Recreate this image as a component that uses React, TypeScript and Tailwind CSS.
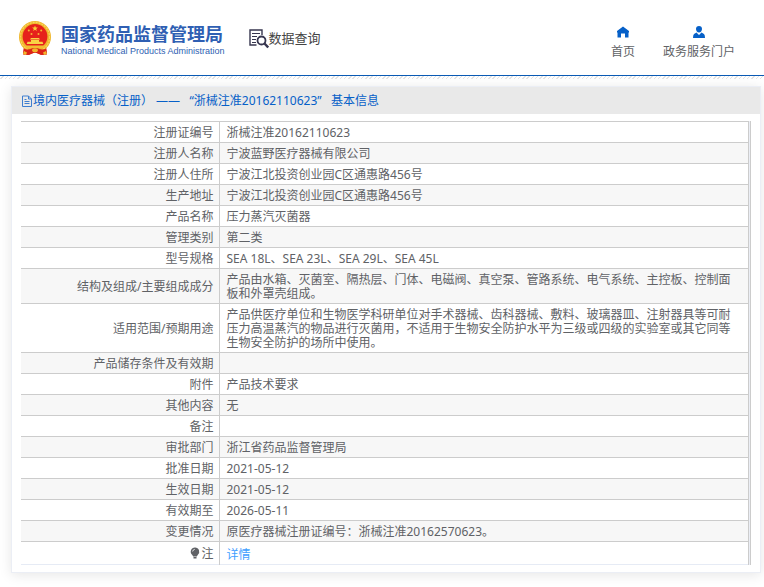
const rows: { label: string; value: string }[] = [
  { label: '注册证编号', value: '浙械注准20162110623' },
  { label: '注册人名称', value: '宁波蓝野医疗器械有限公司' },
  { label: '注册人住所', value: '宁波江北投资创业园C区通惠路456号' },
  { label: '生产地址', value: '宁波江北投资创业园C区通惠路456号' },
  { label: '产品名称', value: '压力蒸汽灭菌器' },
  { label: '管理类别', value: '第二类' },
  { label: '型号规格', value: 'SEA 18L、SEA 23L、SEA 29L、SEA 45L' },
  {
    label: '结构及组成/主要组成成分',
    value: '产品由水箱、灭菌室、隔热层、门体、电磁阀、真空泵、管路系统、电气系统、主控板、控制面板和外罩壳组成。',
  },
  {
    label: '适用范围/预期用途',
    value:
      '产品供医疗单位和生物医学科研单位对手术器械、齿科器械、敷料、玻璃器皿、注射器具等可耐压力高温蒸汽的物品进行灭菌用，不适用于生物安全防护水平为三级或四级的实验室或其它同等生物安全防护的场所中使用。',
  },
  { label: '产品储存条件及有效期', value: '' },
  { label: '附件', value: '产品技术要求' },
  { label: '其他内容', value: '无' },
  { label: '备注', value: '' },
  { label: '审批部门', value: '浙江省药品监督管理局' },
  { label: '批准日期', value: '2021-05-12' },
  { label: '生效日期', value: '2021-05-12' },
  { label: '有效期至', value: '2026-05-11' },
  { label: '变更情况', value: '原医疗器械注册证编号：浙械注准20162570623。' },
]

function Emblem() {
  return (
    <svg className="h-[35px] w-8 shrink-0" viewBox="0 0 32 35" aria-hidden="true">
      <path d="M5 25 L27 25 L28 33 L22 34 L16 31 L10 34 L4 33Z" fill="#dc2318" />
      <circle cx="16" cy="16" r="16" fill="#efb52c" />
      <circle cx="16" cy="16" r="14.6" fill="none" stroke="#f9d65a" strokeWidth="1.2" strokeDasharray="2 1" />
      <circle cx="16" cy="15.5" r="12.4" fill="#e6211b" />
      <path d="M16 4.6l.8 2h2.1l-1.7 1.3.7 2.1-1.9-1.3-1.9 1.3.7-2.1-1.7-1.3h2.1z" fill="#f9cf3a" />
      <g fill="#f4b834">
        <circle cx="9.8" cy="9.5" r="1" />
        <circle cx="22.2" cy="9.5" r="1" />
        <circle cx="12.5" cy="13" r="1" />
        <circle cx="19.5" cy="13" r="1" />
      </g>
      <path d="M11 18.500l1-1.500h8l1 1.500zM12 19h8v1.800h3.500l.8 2.200H7.700l.8-2.200H12z" fill="#f9d245" />
      <path d="M5.500 24.500h21l-2 2.500h-17z" fill="#f2bd32" />
      <path d="M5 27.500c3 2 7 0 11 0s8 2 11 0l1 6-5 .5-7-2.500L9 34l-5-.5z" fill="#dc2318" />
      <path d="M13 29.500a3 2.200 0 0 1 6 0l-1 1.500h-4zM5 30l3 1.500-1 2.500-3-1zM27 30l-3 1.500 1 2.500 3-1z" fill="#f2b52d" />
    </svg>
  )
}

function SearchDocIcon() {
  return (
    <svg className="h-5 w-5 shrink-0" viewBox="0 0 20 20" fill="none" stroke="#37364f" aria-hidden="true">
      <path d="M7.500 16H1V1h12v5" strokeWidth="1.4" />
      <path d="M3 4.500h8M3 7.500h5M3 10.500h4M3 13.500h4" strokeWidth="1.2" />
      <circle cx="12.5" cy="11.5" r="4" strokeWidth="1.8" />
      <path d="M15.500 14.500l3.700 4" strokeWidth="2.4" />
    </svg>
  )
}

function HomeIcon() {
  return (
    <svg className="h-3 w-3" viewBox="0 0 12 12" fill="#0660c8" aria-hidden="true">
      <path d="M6 0.500l6 4.500v1.500h-.5v5H8V7.500H4v4H.5v-5H0V5z" />
    </svg>
  )
}

function UserIcon() {
  return (
    <svg className="h-3 w-3" viewBox="0 0 12 12" fill="#0660c8" aria-hidden="true">
      <path d="M6 0a3 3 0 0 1 3 3c0 1.700-1.300 3.500-3 3.500S3 4.700 3 3a3 3 0 0 1 3-3zM3.500 6.500L6 9l2.500-2.500 2.500 1.500q1 .8 1 4H0q0-3.200 1-4z" />
    </svg>
  )
}

function DocIcon() {
  return (
    <svg className="h-3 w-3 shrink-0" viewBox="0 0 12 12" fill="none" stroke="#3f7fd0" aria-hidden="true">
      <path d="M1.500 1h6l3 3v7.500h-9zM7.500 1v3h3M3.500 6.500h5M3.500 8.500h5M3.500 4.500h2" />
    </svg>
  )
}

function BulbIcon() {
  return (
    <svg className="h-3 w-3" viewBox="0 0 12 12" aria-hidden="true">
      <path d="M6 0.500a4.300 4.300 0 0 1 2.700 7.600L7.800 9.500H4.200L3.300 8.100A4.300 4.300 0 0 1 6 0.500zM4.500 10h3v1.500h-3z" fill="#606266" />
      <path d="M3.600 4.500A2.600 2.600 0 0 1 5.800 2.300" fill="none" stroke="#fff" strokeWidth=".8" />
    </svg>
  )
}

export default function App() {
  return (
    <div className="bg-white pb-[14px] font-['Noto_Sans','Noto_Sans_CJK_SC',sans-serif] text-xs text-[#606266]">
      <header className="flex h-[76px] items-center justify-between border-b border-[#0a5ab4] pr-[29px] pl-[19px]">
        <div className="flex items-center pt-[2px]">
          <Emblem />
          <div className="ml-[10px] text-[#2f5fb3]">
            <h1 className="pt-[2px] font-['Noto_Sans_CJK_SC',sans-serif] text-lg leading-5 font-bold whitespace-nowrap">
              国家药品监督管理局
            </h1>
            <p className="pt-[2px] font-['Liberation_Sans',sans-serif] text-[9px] leading-3 whitespace-nowrap">
              National Medical Products Administration
            </p>
          </div>
          <div className="ml-6 flex items-center">
            <SearchDocIcon />
            <span className="text-[13px] whitespace-nowrap text-[#444]">数据查询</span>
          </div>
        </div>
        <nav className="flex gap-7 pt-[10px]">
          <a href="#" className="flex flex-col items-center gap-[6px]">
            <HomeIcon />
            <span>首页</span>
          </a>
          <a href="#" className="flex flex-col items-center gap-[6px]">
            <UserIcon />
            <span>政务服务门户</span>
          </a>
        </nav>
      </header>
      <div className="h-[3px] bg-[repeating-linear-gradient(135deg,#fff_0px,#fff_2px,#e4e4e4_2px,#e4e4e4_3px)]" />

      <main className="mt-[7px] mr-[3px] ml-[11px] border border-[#ebeef5] bg-white shadow-[0_2px_12px_rgba(0,0,0,0.1)]">
        <h2 className="flex h-[27px] items-center bg-[#e9e9e9] px-[9px] text-[#0660c8]">
          <DocIcon />
          <span className="whitespace-pre">境内医疗器械（注册） ——   “浙械注准20162110623”   基本信息</span>
        </h2>
        <div className="mx-[9px] my-[7px] border-r border-[#ccc] bg-[#ebeef5] pr-px">
          <table className="w-full table-fixed border-collapse border-b border-[#e6ebf5] bg-white leading-[14px]">
            <colgroup>
              <col className="w-[198px]" />
              <col />
            </colgroup>
            <tbody>
              {rows.map((row) => (
                <tr key={row.label} className="even:bg-[#f7f7f7]">
                  <th scope="row" className="h-[21px] border-y border-r border-[#ccc] px-[5px] pt-1 pb-[2px] text-right font-normal">
                    {row.label}
                  </th>
                  <td className="border border-[#ccc] pt-1 pr-3 pb-[2px] pl-[7px]">{row.value}</td>
                </tr>
              ))}
              <tr>
                <th scope="row" className="h-[23px] border-t border-r border-[#ccc] px-[5px] pt-[5px] pb-[3px] font-normal">
                  <span className="flex items-start justify-end">
                    <BulbIcon />注
                  </span>
                </th>
                <td className="border-x border-t border-[#ccc] px-[7px] pt-[6px] pb-[2px]">
                  <a href="#" className="text-[#409eff]">
                    详情
                  </a>
                </td>
              </tr>
            </tbody>
          </table>
        </div>
      </main>
    </div>
  )
}
